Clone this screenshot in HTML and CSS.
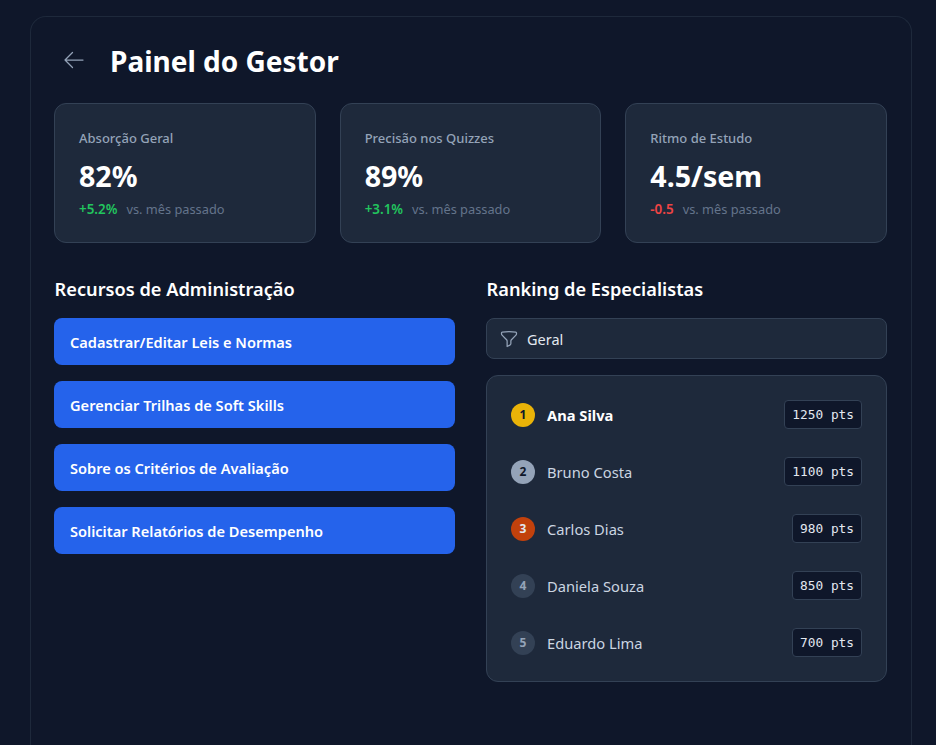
FILE: index.html
```
<!DOCTYPE html>
<html lang="pt">
<head>
<meta charset="utf-8">
<title>Painel do Gestor</title>
<link rel="stylesheet" href="styles.css">
</head>
<body>
<main class="panel">
  <header class="head">
    <button class="back" aria-label="Voltar">
      <svg width="24" height="24" viewBox="0 0 24 24" fill="none" stroke="currentColor" stroke-width="1.25" stroke-linecap="round" stroke-linejoin="round"><path d="M10.5 19.5 3 12m0 0 7.5-7.5M3 12h18"/></svg>
    </button>
    <h1>Painel do Gestor</h1>
  </header>
  <section class="stats">
    <div class="card"><p class="label">Absorção Geral</p><p class="value">82%</p><p class="delta"><b class="up">+5.2%</b><span>vs. mês passado</span></p></div>
    <div class="card"><p class="label">Precisão nos Quizzes</p><p class="value">89%</p><p class="delta"><b class="up">+3.1%</b><span>vs. mês passado</span></p></div>
    <div class="card"><p class="label">Ritmo de Estudo</p><p class="value">4.5/sem</p><p class="delta"><b class="down">-0.5</b><span>vs. mês passado</span></p></div>
  </section>
  <section class="cols">
    <div class="col">
      <h2>Recursos de Administração</h2>
      <div class="actions">
        <button class="action">Cadastrar/Editar Leis e Normas</button>
        <button class="action">Gerenciar Trilhas de Soft Skills</button>
        <button class="action">Sobre os Critérios de Avaliação</button>
        <button class="action">Solicitar Relatórios de Desempenho</button>
      </div>
    </div>
    <div class="col">
      <h2>Ranking de Especialistas</h2>
      <div class="filter">
        <svg width="20" height="20" viewBox="0 0 24 24" fill="none" stroke="currentColor" stroke-width="1.5" stroke-linecap="round" stroke-linejoin="round"><path d="M12 3c2.755 0 5.455.232 8.083.678.533.09.917.556.917 1.096v1.044a2.25 2.25 0 0 1-.659 1.591l-5.432 5.432a2.25 2.25 0 0 0-.659 1.591v2.927a2.25 2.25 0 0 1-1.244 2.013L9.75 21v-6.568a2.25 2.25 0 0 0-.659-1.591L3.659 7.409A2.25 2.25 0 0 1 3 5.818V4.774c0-.54.384-1.006.917-1.096A48.32 48.32 0 0 1 12 3Z"/></svg>
        <span>Geral</span>
      </div>
      <ul class="rank">
        <li class="row top"><span class="num gold">1</span><span class="name">Ana Silva</span><span class="pts">1250 pts</span></li>
        <li class="row"><span class="num silver">2</span><span class="name">Bruno Costa</span><span class="pts">1100 pts</span></li>
        <li class="row"><span class="num bronze">3</span><span class="name">Carlos Dias</span><span class="pts">980 pts</span></li>
        <li class="row"><span class="num">4</span><span class="name">Daniela Souza</span><span class="pts">850 pts</span></li>
        <li class="row"><span class="num">5</span><span class="name">Eduardo Lima</span><span class="pts">700 pts</span></li>
      </ul>
    </div>
  </section>
</main>
</body>
</html>
```
FILE: styles.css
```
* { box-sizing: border-box; }
html, body { margin: 0; height: 745px; overflow: hidden; }
body {
  background: #0f172a;
  color: #fff;
  font-family: "Noto Sans", sans-serif;
  padding: 16px 24px 0 30px;
}
p, h1, h2, ul { margin: 0; padding: 0; }
.panel {
  width: 882px;
  height: 729px;
  border: 1px solid #1e293b;
  border-bottom: 0;
  border-radius: 16px 16px 0 0;
  padding: 24px 24px 0 23px;
}
.head { display: flex; align-items: center; gap: 24px; height: 40px; margin-bottom: 22px; }
.back {
  background: none; border: 0; padding: 0; color: #94a3b8;
  width: 24px; height: 24px; margin-left: 8px;
  align-self: flex-start; margin-top: 7px;
  display: flex;
}
h1 { font-size: 28px; line-height: 40px; font-weight: 700; }
.stats { display: grid; grid-template-columns: repeat(3, 1fr); gap: 24px; margin-bottom: 32px; }
.card {
  background: #1e293b;
  border: 1px solid #334155;
  border-radius: 12px;
  padding: 24px;
  height: 140px;
}
.label { font-size: 13px; line-height: 20px; font-weight: 500; color: #94a3b8; }
.value { font-size: 28.6px; line-height: 36px; font-weight: 700; margin-top: 10px; }
.delta { font-size: 12.8px; line-height: 16px; margin-top: 7px; display: flex; gap: 9px; color: #64748b; }
.delta b { font-weight: 600; font-size: 13.4px; }
.up { color: #22c55e; }
.down { color: #ef4444; }
.cols { display: grid; grid-template-columns: 401px 401px; gap: 31px; }
h2 { font-size: 18.2px; line-height: 28px; font-weight: 600; margin-bottom: 15px; text-indent: 0.6px; }
.actions { display: flex; flex-direction: column; gap: 16px; }
.action {
  height: 47px;
  background: #2563eb;
  color: #fff;
  border: 0;
  border-radius: 8px;
  padding: 0 16px;
  text-align: left;
  font: 600 14.6px "Noto Sans", sans-serif;
}
.filter {
  height: 41px;
  background: #1e293b;
  border: 1px solid #334155;
  border-radius: 8px;
  padding: 0 12px;
  display: flex;
  align-items: center;
  gap: 8px;
  font-size: 14.5px;
  color: #e2e8f0;
  margin-bottom: 16px;
}
.filter svg { color: #94a3b8; }
.rank {
  list-style: none;
  background: #1e293b;
  border: 1px solid #334155;
  border-radius: 12px;
  padding: 24px;
  display: flex;
  flex-direction: column;
  gap: 28px;
}
.row { display: flex; align-items: center; height: 29px; font-size: 14.7px; color: #cbd5e1; }
.num {
  width: 24px; height: 24px; border-radius: 50%;
  background: #334155; color: #94a3b8;
  font-size: 12px; font-weight: 700;
  display: flex; align-items: center; justify-content: center;
  margin-right: 12px;
}
.gold { background: #eab308; color: #0f172a; }
.silver { background: #94a3b8; color: #0f172a; }
.bronze { background: #c2410c; color: #e2e8f0; }
.name { flex: 1; }
.top .name { color: #fff; font-weight: 700; }
.pts {
  font: 12.8px/15px "DejaVu Sans Mono", monospace;
  color: #e2e8f0;
  background: #0f172a;
  border: 1px solid #334155;
  border-radius: 4px;
  padding: 6px 7px;
}
```
